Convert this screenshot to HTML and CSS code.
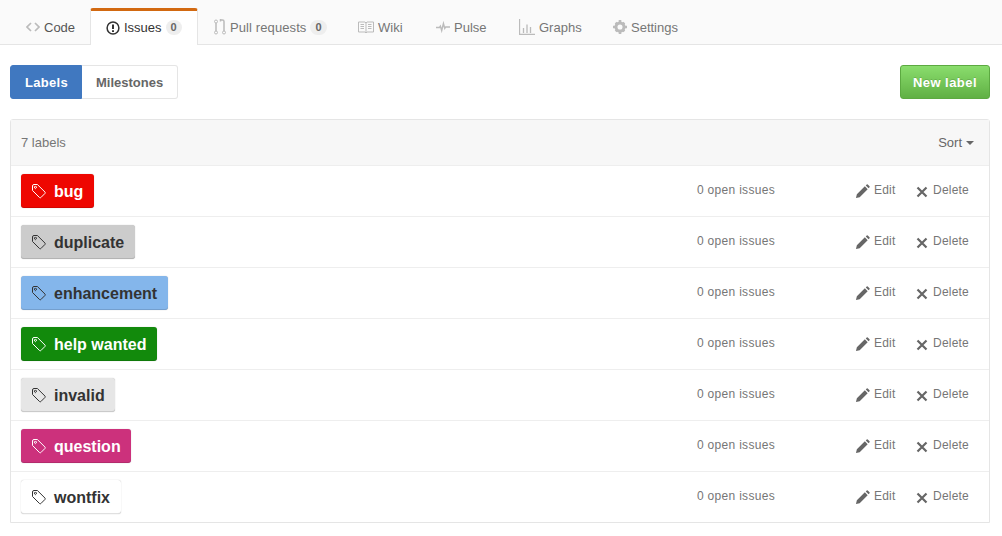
FILE: index.html
```html
<!DOCTYPE html>
<html lang="en">
<head>
  <meta charset="UTF-8">
  <title>Labels</title>
  <link rel="stylesheet" href="styles.css">
</head>
<body>
  <svg class="defs" width="0" height="0">
    <symbol id="i-tag" viewBox="0 0 16 16"><path d="M1.5 3 Q1.5 1.5 3 1.5 H6.4 L14 9.1 Q14.6 9.8 14 10.4 L9.8 14.6 Q9.2 15.2 8.6 14.6 L1.5 7.5 Z M4.4 3.4 a1 1 0 1 0 .01 0" fill="none" stroke="currentColor" stroke-width="1"/></symbol>
    <symbol id="i-edit" viewBox="0 0 16 16"><path d="M1 15 L2 11 L10.5 2.5 L13.5 5.5 L5 14 Z M11.5 1.5 L12.5 .5 Q13 0 13.6 .5 L15.5 2.4 Q16 3 15.5 3.5 L14.5 4.5 Z" fill="currentColor"/></symbol>
    <symbol id="i-x" viewBox="0 0 12 12"><path d="M1.5 1.5 L10.5 10.5 M10.5 1.5 L1.5 10.5" fill="none" stroke="currentColor" stroke-width="2.2"/></symbol>
  </svg>

  <nav class="tabs">
    <a class="tab"><svg class="tab-icon" viewBox="0 0 14 14"><path d="M5 3 L1 7 L5 11 M9 3 L13 7 L9 11" fill="none" stroke="currentColor" stroke-width="1.7"/></svg><span class="tab-dark">Code</span></a>
    <a class="tab active"><svg class="tab-icon" viewBox="0 0 14 14"><circle cx="7" cy="7" r="5.9" fill="none" stroke="currentColor" stroke-width="1.5"/><path d="M6 3.5 H8 V8 H6 Z M6 9.2 H8 V11 H6 Z" fill="currentColor"/></svg>Issues<span class="count">0</span></a>
    <a class="tab"><svg class="tab-icon pr" viewBox="0 0 12 16"><path d="M2 4 V12 M10 5 V12 M6 1 H8.5 Q10 1 10 2.5 V5 M6.5 -.5 V2.5" fill="none" stroke="currentColor" stroke-width="1.5"/><circle cx="2" cy="2.5" r="1.5" fill="none" stroke="currentColor"/><circle cx="2" cy="13.5" r="1.5" fill="none" stroke="currentColor"/><circle cx="10" cy="13.5" r="1.5" fill="none" stroke="currentColor"/></svg>Pull requests<span class="count">0</span></a>
    <a class="tab"><svg class="tab-icon wide" viewBox="0 0 16 14"><path d="M.5 2 H7 L8 3 L9 2 H15.5 V12 H9 L8 13 L7 12 H.5 Z M8 3 V12 M2.5 4.5 H6 M2.5 6.5 H6 M2.5 8.5 H6 M10 4.5 H13.5 M10 6.5 H13.5 M10 8.5 H13.5" fill="none" stroke="currentColor"/></svg>Wiki</a>
    <a class="tab"><svg class="tab-icon" viewBox="0 0 16 14"><path d="M0 7.5 H4 L5 6 L6.5 11 L8.5 3 L10 8.5 L11 7 H16" fill="none" stroke="currentColor" stroke-width="1.6"/></svg>Pulse</a>
    <a class="tab"><svg class="tab-icon wide" viewBox="0 0 16 16"><path d="M.5 0 V15.5 H16 M4.5 9 V14 M8 5.5 V14 M11.5 8 V14" fill="none" stroke="currentColor" stroke-width="1.3"/></svg>Graphs</a>
    <a class="tab"><svg class="tab-icon" viewBox="0 0 16 16"><circle cx="8" cy="8" r="4.6" fill="none" stroke="currentColor" stroke-width="3.4"/><path d="M6.5 0 H9.5 V3 H6.5 Z M6.5 13 H9.5 V16 H6.5 Z M0 6.5 H3 V9.5 H0 Z M13 6.5 H16 V9.5 H13 Z M2 4 L4 2 L6 4 L4 6 Z M12 2 L14 4 L12 6 L10 4 Z M2 12 L4 10 L6 12 L4 14 Z M12 10 L14 12 L12 14 L10 12 Z" fill="currentColor"/></svg>Settings</a>
  </nav>

  <main class="content">
    <div class="toolbar">
      <div class="switcher">
        <a class="switch selected">Labels</a>
        <a class="switch">Milestones</a>
      </div>
      <a class="btn-new">New label</a>
    </div>

    <section class="box">
      <header class="box-head">
        <span>7 labels</span>
        <span class="sort">Sort<i class="caret"></i></span>
      </header>
      <ul class="rows">
        <li class="row">
          <span class="label light" style="background:#ee0701"><svg class="tag"><use href="#i-tag"/></svg>bug</span>
          <span class="open">0 open issues</span>
          <span class="actions"><a class="action edit"><svg><use href="#i-edit"/></svg>Edit</a><a class="action del"><svg><use href="#i-x"/></svg>Delete</a></span>
        </li>
        <li class="row">
          <span class="label" style="background:#cccccc"><svg class="tag"><use href="#i-tag"/></svg>duplicate</span>
          <span class="open">0 open issues</span>
          <span class="actions"><a class="action edit"><svg><use href="#i-edit"/></svg>Edit</a><a class="action del"><svg><use href="#i-x"/></svg>Delete</a></span>
        </li>
        <li class="row">
          <span class="label" style="background:#84b6eb"><svg class="tag"><use href="#i-tag"/></svg>enhancement</span>
          <span class="open">0 open issues</span>
          <span class="actions"><a class="action edit"><svg><use href="#i-edit"/></svg>Edit</a><a class="action del"><svg><use href="#i-x"/></svg>Delete</a></span>
        </li>
        <li class="row">
          <span class="label light" style="background:#128a0c"><svg class="tag"><use href="#i-tag"/></svg>help wanted</span>
          <span class="open">0 open issues</span>
          <span class="actions"><a class="action edit"><svg><use href="#i-edit"/></svg>Edit</a><a class="action del"><svg><use href="#i-x"/></svg>Delete</a></span>
        </li>
        <li class="row">
          <span class="label" style="background:#e6e6e6"><svg class="tag"><use href="#i-tag"/></svg>invalid</span>
          <span class="open">0 open issues</span>
          <span class="actions"><a class="action edit"><svg><use href="#i-edit"/></svg>Edit</a><a class="action del"><svg><use href="#i-x"/></svg>Delete</a></span>
        </li>
        <li class="row">
          <span class="label light" style="background:#cc317c"><svg class="tag"><use href="#i-tag"/></svg>question</span>
          <span class="open">0 open issues</span>
          <span class="actions"><a class="action edit"><svg><use href="#i-edit"/></svg>Edit</a><a class="action del"><svg><use href="#i-x"/></svg>Delete</a></span>
        </li>
        <li class="row">
          <span class="label" style="background:#ffffff"><svg class="tag"><use href="#i-tag"/></svg>wontfix</span>
          <span class="open">0 open issues</span>
          <span class="actions"><a class="action edit"><svg><use href="#i-edit"/></svg>Edit</a><a class="action del"><svg><use href="#i-x"/></svg>Delete</a></span>
        </li>
      </ul>
    </section>
  </main>
</body>
</html>
```

FILE: styles.css
```css
* { box-sizing: border-box; }
body { margin: 0; font-family: "Liberation Sans", Arial, sans-serif; font-size: 13px; color: #333; background: #fff; overflow: hidden; }
.defs { position: absolute; }

.tabs { display: flex; height: 45px; padding: 8px 0 0 10px; background: #fafafa; border-bottom: 1px solid #e5e5e5; }
.tab { flex: none; display: flex; align-items: center; height: 37px; padding: 0 0 1px 15px; font-size: 13px; color: #767676; border: 1px solid transparent; border-top-width: 3px; border-radius: 3px 3px 0 0; }
.tab:nth-child(1) { width: 80px; }
.tab:nth-child(2) { width: 108px; }
.tab:nth-child(3) { width: 144px; letter-spacing: .1px; }
.tab:nth-child(4) { width: 78px; }
.tab:nth-child(5) { width: 83px; }
.tab:nth-child(6) { width: 94px; }
.tab-dark { color: #555; }
.tab.active { color: #333; background: #fff; border-color: #e5e5e5; border-top-color: #d26911; border-bottom: 0; }
.tab-icon { flex: none; width: 14px; height: 14px; margin-right: 4px; color: #bbb; }
.tab-icon.wide { width: 16px; height: 16px; }
.tab-icon.pr { width: 12px; height: 16px; }
.tab.active .tab-icon { color: #333; }
.count { margin-left: 4px; padding: 2px 5px; font-size: 11px; font-weight: bold; line-height: 1; letter-spacing: 0; color: #666; background: #eee; border-radius: 20px; }

.content { padding: 20px 12px 0 10px; }
.toolbar { display: flex; justify-content: space-between; align-items: flex-start; }
.switcher { display: flex; }
.switch { height: 34px; padding: 1px 14px 0; font-weight: bold; font-size: 13px; line-height: 32px; color: #666; background: #fff; border: 1px solid #e5e5e5; border-left: 0; border-radius: 0 3px 3px 0; }
.switch.selected { padding: 1px 13px 0 14px; letter-spacing: .3px; color: #fff; background: #4078c0; border: 1px solid #4078c0; border-radius: 3px 0 0 3px; }
.btn-new { height: 34px; padding: 1px 12px 0; font-weight: bold; font-size: 13px; letter-spacing: .45px; line-height: 32px; color: #fff; text-shadow: 0 -1px 0 rgba(0, 0, 0, .15); background: linear-gradient(#8add6d, #60b044); border: 1px solid #5ca941; border-radius: 3px; }

.box { margin-top: 20px; border: 1px solid #e5e5e5; border-radius: 3px 3px 0 0; }
.box-head { display: flex; justify-content: space-between; align-items: center; height: 46px; padding: 0 15px 0 10px; font-size: 13px; color: #767676; background: #f7f7f7; border-bottom: 1px solid #eee; }
.sort { display: flex; align-items: center; color: #666; }
.caret { margin-left: 4px; border: 4px solid transparent; border-top-color: #666; border-bottom: 0; }

.rows { margin: 0; padding: 0; list-style: none; }
.row { display: flex; align-items: center; height: 51px; padding: 0 20px 0 10px; border-bottom: 1px solid #eee; }
.row:last-child { border-bottom: 0; height: 50px; }
.label { display: flex; align-items: center; height: 34px; padding: 1px 10.6px 0 10px; font-size: 16px; font-weight: bold; color: #333; border-radius: 3px; box-shadow: inset 0 -1px 0 rgba(0, 0, 0, .12), 0 0 1px rgba(0, 0, 0, .3); }
.label.light { color: #fff; }
.tag { width: 16px; height: 16px; margin-right: 7px; margin-top: -1px; }
.open { margin-left: auto; width: 158px; margin-top: -2px; font-size: 12px; letter-spacing: .3px; color: #767676; }
.actions { display: flex; width: 114px; justify-content: space-between; margin-top: -2px; }
.action { display: flex; align-items: center; font-size: 12px; letter-spacing: .2px; color: #767676; }
.action svg { flex: none; color: #666; }
.edit svg { width: 15px; height: 15px; margin: 3px 4px 0 0; }
.del svg { width: 12px; height: 12px; margin: 3px 5px 0 0; }
```
